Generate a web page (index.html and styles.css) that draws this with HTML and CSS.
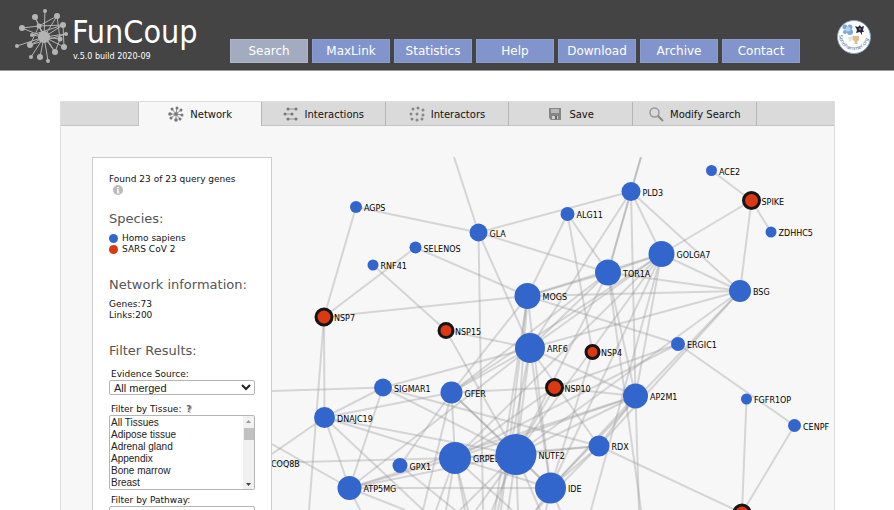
FILE: index.html
```html
<!DOCTYPE html>
<html lang="en">
<head>
<meta charset="utf-8">
<title>FunCoup</title>
<link rel="stylesheet" href="styles.css">
</head>
<body>
<header class="header">
  <a class="brand" href="#">
    <svg class="brand-logo" viewBox="0 0 56 58" aria-hidden="true">
      <g stroke="#b4b4b4" stroke-width="1" fill="none">
        <path d="M29 30L30 4M29 30L20 10M29 30L42 9M29 30L48 18M29 30L51 27M29 30L45 32M29 30L49 40M29 30L40 45M29 30L33 54M29 30L25 50M29 30L16 50M29 30L15 38M29 30L2 39M29 30L17 28M29 30L7 21M29 30L24 19"/>
        <path d="M20 10L24 19L48 18M42 9L24 19M24 19L7 21M42 9L45 32M48 18L17 28M15 38L51 27M15 38L24 19M45 32L40 45M48 18L49 40M24 19L40 45"/>
      </g>
      <g fill="#b4b4b4">
        <circle cx="29" cy="30" r="6"/><circle cx="30" cy="4" r="2"/><circle cx="20" cy="10" r="3"/>
        <circle cx="42" cy="9" r="3"/><circle cx="48" cy="18" r="3"/><circle cx="51" cy="27" r="2"/>
        <circle cx="45" cy="32" r="2.5"/><circle cx="49" cy="40" r="3"/><circle cx="40" cy="45" r="3"/>
        <circle cx="33" cy="54" r="2"/><circle cx="25" cy="50" r="3"/><circle cx="16" cy="50" r="2"/>
        <circle cx="15" cy="38" r="3"/><circle cx="2" cy="39" r="2"/><circle cx="17" cy="28" r="2"/>
        <circle cx="7" cy="21" r="3"/><circle cx="24" cy="19" r="2.5"/>
      </g>
    </svg>
    <span class="brand-text">
      <span class="brand-name">FunCoup</span>
      <span class="brand-version">v.5.0 build 2020-09</span>
    </span>
  </a>
  <nav class="nav">
    <a class="nav-item active" href="#">Search</a>
    <a class="nav-item" href="#">MaxLink</a>
    <a class="nav-item" href="#">Statistics</a>
    <a class="nav-item" href="#">Help</a>
    <a class="nav-item" href="#">Download</a>
    <a class="nav-item" href="#">Archive</a>
    <a class="nav-item" href="#">Contact</a>
  </nav>
  <a class="lab" href="#" aria-label="sonnhammer.org">
    <svg viewBox="0 0 36 36">
      <circle cx="18" cy="18" r="16.5" fill="#fff" stroke="#86a3c8"/>
      <g fill="#7fa8d6"><circle cx="9" cy="8" r="2.5"/><circle cx="14" cy="8" r="2.5"/><circle cx="9" cy="13" r="2"/><circle cx="14" cy="13" r="3"/></g>
      <circle cx="12" cy="10" r="2.5" fill="#b5d0ea"/>
      <path d="M19 7l3 1 2-2 1 2 3-1-1 4 1 2-2 0 0 3-2-3-4 1 1-3z" fill="#222a3c"/>
      <circle cx="24" cy="10" r="1" fill="#c66"/>
      <path d="M12 18l5-1v4l-4 2z" fill="#e4e4e4"/>
      <path d="M17 17h6v4l-2 2 1 2h-4l1-2-2-2z" fill="#e2bd8c"/>
      <path id="labArc" d="M3 16A15 15 0 0 0 33 16" fill="none"/>
      <text class="lab-text"><textPath href="#labArc">Sonnhammer.org</textPath></text>
    </svg>
  </a>
</header>

<main class="results">
  <nav class="tabs">
    <a class="tab current" href="#">
      <svg class="tab-icon" viewBox="0 0 16 16"><g stroke="#888" fill="#777"><path d="M8 8L9 2M8 8L13 4M8 8L14 9M8 8L12 13M8 8L8 14M8 8L3 12M8 8L2 8M8 8L4 3" /><g stroke="none"><circle cx="9" cy="2" r="1.5"/><circle cx="13" cy="4" r="1.5"/><circle cx="14" cy="9" r="1.5"/><circle cx="12" cy="13" r="1.5"/><circle cx="8" cy="14" r="1.8"/><circle cx="3" cy="12" r="1.5"/><circle cx="2" cy="8" r="1.8"/><circle cx="4" cy="3" r="1.5"/><circle cx="8" cy="8" r="1.8"/></g></g></svg>
      Network</a>
    <a class="tab" href="#">
      <svg class="tab-icon" viewBox="0 0 16 16"><g stroke="#999" fill="#777"><path d="M5 3H13M2 8H9M5 13H13"/><g stroke="none"><circle cx="5" cy="3" r="1.5"/><circle cx="13" cy="3" r="1.5"/><circle cx="2" cy="8" r="1.5"/><circle cx="9" cy="8" r="1.5"/><circle cx="5" cy="13" r="1.5"/><circle cx="13" cy="13" r="1.5"/></g></g></svg>
      Interactions</a>
    <a class="tab" href="#">
      <svg class="tab-icon" viewBox="0 0 16 16"><g fill="#888"><circle cx="9" cy="2" r="1.5"/><circle cx="14" cy="4" r="1.5"/><circle cx="4" cy="3" r="1.5"/><circle cx="2" cy="8" r="1.5"/><circle cx="8" cy="8" r="1.5"/><circle cx="14" cy="9" r="1.5"/><circle cx="3" cy="13" r="1.5"/><circle cx="8" cy="14" r="1.5"/><circle cx="13" cy="13" r="1.5"/></g></svg>
      Interactors</a>
    <a class="tab" href="#">
      <svg class="tab-icon" viewBox="0 0 16 16"><path d="M2 2H14V14H4L2 12Z" fill="#858585"/><path d="M4 3H12V7H4Z" fill="#dadada"/><path d="M4 4H12M4 6H12" stroke="#999"/><path d="M5 10H11V13H5Z" fill="#cfcfcf"/><path d="M8 10H10V13H8Z" fill="#666"/></svg>
      Save</a>
    <a class="tab" href="#">
      <svg class="tab-icon" viewBox="0 0 16 16"><circle cx="6.5" cy="6.5" r="4.5" fill="none" stroke="#999" stroke-width="1.5"/><path d="M10 10L15 15" stroke="#888" stroke-width="2"/></svg>
      Modify Search</a>
  </nav>

  <div class="content">
    <aside class="panel">
      <p class="query">Found 23 of 23 query genes
        <svg class="info" viewBox="0 0 10 10"><circle cx="5" cy="5" r="5" fill="#bbb"/><path d="M5 2V3.2M5 4.2V8" stroke="#fff" stroke-width="1.6" fill="none"/><path d="M4 4.5H5M4 8H6.5" stroke="#fff" stroke-width=".8"/></svg>
      </p>

      <section class="section">
        <h2>Species:</h2>
        <div class="species"><span class="dot human"></span>Homo sapiens</div>
        <div class="species"><span class="dot virus"></span>SARS CoV 2</div>
      </section>

      <section class="section">
        <h2>Network information:</h2>
        <div>Genes:73</div>
        <div>Links:200</div>
      </section>

      <form class="section">
        <h2>Filter Results:</h2>
        <div class="field">
          <label for="evidence">Evidence Source:</label>
          <select id="evidence"><option>All merged</option></select>
        </div>
        <div class="field list">
          <label for="tissue">Filter by Tissue: <b class="help">?</b></label>
          <select id="tissue" size="6">
            <option>All Tissues</option><option>Adipose tissue</option><option>Adrenal gland</option>
            <option>Appendix</option><option>Bone marrow</option><option>Breast</option>
          </select>
          <svg class="scrollbar" viewBox="0 0 11 73" aria-hidden="true">
            <path d="M0 0H11V73H0Z" fill="#f1f1f1"/>
            <path d="M3 7H8L5.5 4Z" fill="#999"/>
            <path d="M1 12H11V24H1Z" fill="#c1c1c1"/>
            <path d="M3 67H8L5.5 70Z" fill="#444"/>
          </svg>
        </div>
        <div class="field">
          <label for="pathway">Filter by Pathway:</label>
          <select id="pathway"><option>None</option></select>
        </div>
      </form>
    </aside>
    <svg class="graph" id="graph"></svg>
  </div>
</main>
<script src="network.js"></script>
</body>
</html>
```
FILE: styles.css
```css
body {
    margin: 0;
    height: 100vh;
    overflow: hidden;
    background: #fff;
    color: #111;
    font-family: Verdana, "DejaVu Sans", sans-serif;
    font-size: 9px;
    line-height: 11px;
}

a {
    color: inherit;
    text-decoration: none;
}

/* header */
.header {
    display: flex;
    height: 70px;
    background: #444;
    border-bottom: 1px solid #999;
    color: #fff;
}

.brand {
    display: flex;
    width: 215px;
    padding: 7px 0 0 15px;
}

.brand-logo {
    width: 56px;
    height: 58px;
}

.brand-text {
    display: flex;
    flex-direction: column;
    padding: 7px 0 0 1px;
}

.brand-name {
    font-family: "DejaVu Sans Condensed", "DejaVu Sans", sans-serif;
    font-size: 32px;
    line-height: 37px;
}

.brand-version {
    padding-left: 1px;
    font-size: 8px;
}

.nav {
    display: flex;
    align-items: flex-end;
    gap: 4px;
    padding-bottom: 7px;
}

.nav-item {
    box-sizing: border-box;
    width: 78px;
    height: 24px;
    border: 1px solid #8c9dcb;
    background: #8195cc;
    font-size: 12px;
    line-height: 22px;
    text-align: center;
}

.nav-item.active {
    border-color: #adb5c6;
    background: #a2abc0;
}

.lab {
    width: 36px;
    height: 36px;
    margin: 19px 22px 0 auto;
}

.lab-text {
    fill: #4d6f9c;
    font-size: 5px;
}

/* result box */
.results {
    margin: 30px 59px 0 60px;
    border: 1px solid #ddd;
    background: #f7f7f7;
}

.tabs {
    display: flex;
    height: 24px;
    background: #dadada;
    justify-content: center;
    box-shadow: inset 0 -1px #c4c4c4;
}

.tab {
    display: flex;
    align-items: center;
    justify-content: center;
    gap: 6px;
    box-sizing: border-box;
    width: 16%;
    border-right: 1px solid #b5b5b5;
    color: #111;
    font-size: 10px;
}

.tab.current {
    border-left: 1px solid #c4c4c4;
    background: #f7f7f7;
}

.tab-icon {
    width: 16px;
    height: 16px;
}

.content {
    display: flex;
    padding: 31px 0 0 31px;
}

/* left panel */
.panel {
    box-sizing: border-box;
    width: 180px;
    flex: none;
    padding: 16px;
    border: 1px solid #ccc;
    background: #fff;
}

.query {
    margin: 0 0 16px;
    white-space: nowrap;
}

.info {
    display: block;
    width: 10px;
    height: 10px;
    margin-left: 4px;
}

.section + .section {
    margin-top: 22px;
}

h2 {
    margin: 0 0 6px;
    color: #555;
    font-size: 13px;
    font-weight: normal;
    line-height: 16px;
    white-space: nowrap;
}

.species {
    display: flex;
    align-items: center;
    gap: 4px;
}

.dot {
    width: 9px;
    height: 9px;
    border-radius: 50%;
}

.human {
    background: #3366cc;
}

.virus {
    background: #dc3912;
}

.field {
    position: relative;
    padding-top: 4px;
    margin-bottom: 5px;
}

.field.list {
    margin-bottom: 1px;
}

label {
    display: block;
    padding-left: 2px;
}

.help {
    margin-left: 2px;
    color: #666;
    text-shadow: 1px 1px #bbb;
}

select {
    display: block;
    box-sizing: border-box;
    width: 100%;
    height: 15px;
    padding: 0;
    border: 1px solid #b5b5b5;
    border-radius: 2px;
    background: #fff;
    color: #222;
    font-family: Arial, "Liberation Sans", sans-serif;
    font-size: 11px;
}

.list select {
    height: 75px;
    padding-top: 1px;
    font-size: 10px;
}

.list option {
    min-height: 12px;
    padding: 0 1px;
    line-height: 12px;
}

.scrollbar {
    position: absolute;
    right: 1px;
    bottom: 1px;
    width: 11px;
    height: 73px;
}

/* network */
.graph {
    flex: 1;
    min-width: 0;
    height: 600px;
}

.link {
    stroke: #999;
    stroke-opacity: .36;
    stroke-width: 2px;
}

.node {
    fill: #3366cc;
}

.node.query-gene {
    fill: #dc3912;
    stroke: #151515;
    stroke-width: 3px;
}

.node-label {
    fill: #000;
    font-size: 8px;
}
```
FILE: network.js
```js
// name: [x, y, radius, is query gene]
var nodes = {
  AGPS: [84, 50, 6], GLA: [206.5, 75.5, 9], SELENOS: [143.5, 90.5, 6], RNF41: [101, 108, 5.5],
  NSP7: [52, 160, 8, 1], NSP15: [174, 173.5, 7, 1], MOGS: [255.5, 139, 13], ALG11: [295.5, 57, 7],
  PLD3: [359, 34.5, 9.5], TOR1A: [336, 115.5, 13], GOLGA7: [389.5, 97, 13], ACE2: [439.5, 13.5, 5.5],
  SPIKE: [479.5, 43.5, 8, 1], ZDHHC5: [499, 75, 5.5], BSG: [468, 134, 11], ERGIC1: [406, 187, 7],
  NSP4: [320.5, 195, 6.5, 1], ARF6: [258, 191, 15], NSP10: [282.5, 230.5, 8, 1], AP2M1: [363.5, 239, 12.5],
  SIGMAR1: [111, 230.5, 9], GFER: [179.5, 235.5, 11], DNAJC19: [52.5, 260.5, 10.5], COQ8B: [-11, 306, 8],
  GPX1: [128, 308.5, 7.5], GRPEL1: [183, 301, 16], NUTF2: [244, 297.5, 20.5], RDX: [327, 289, 10.5],
  IDE: [278.5, 331, 15.5], ATP5MG: [77.5, 331, 12], FGFR1OP: [474.5, 242, 5.5], CENPF: [522.5, 268.5, 6.5],
  NSP9: [470, 356, 8, 1]
};

var links = {
  AGPS: ['GLA', 'NSP7'],
  SELENOS: ['NSP7', 'MOGS'],
  RNF41: ['NSP15'],
  NSP7: ['MOGS', 'DNAJC19', [37, 353]],
  GLA: [[182, 0], 'PLD3', 'TOR1A', 'ARF6', [211, 353]],
  MOGS: ['TOR1A', 'GOLGA7', 'BSG', 'ALG11', 'GFER', 'ERGIC1', 'NUTF2', 'IDE', [223, 353], [229, 353]],
  ALG11: ['TOR1A', 'NSP4'],
  PLD3: [[369, 0], [369, 0], 'TOR1A', 'TOR1A', 'GOLGA7', 'BSG', 'AP2M1', 'ARF6'],
  TOR1A: ['GOLGA7', 'BSG', 'ARF6', 'GFER', 'NUTF2', 'AP2M1', [369, 353]],
  GOLGA7: ['SPIKE', 'BSG', 'ARF6', 'AP2M1', 'IDE', 'NUTF2', 'GRPEL1', 'GFER', [319, 353]],
  SPIKE: ['ACE2', 'ZDHHC5', 'BSG'],
  BSG: ['ARF6', 'NUTF2', 'IDE', 'RDX'],
  ERGIC1: ['CENPF', 'NSP10', 'GRPEL1'],
  NSP15: ['ARF6', 'NUTF2'],
  NSP4: ['IDE'],
  ARF6: ['SIGMAR1', 'GFER', 'ATP5MG', 'NUTF2', 'IDE', 'AP2M1', 'RDX', [226, 353]],
  NSP10: ['GFER', 'NUTF2', 'AP2M1', 'GRPEL1'],
  SIGMAR1: [[0, 234], 'DNAJC19', 'ATP5MG', 'NUTF2', 'RDX'],
  GFER: ['DNAJC19', 'GRPEL1', 'NUTF2', 'IDE', 'GPX1', [151, 353]],
  DNAJC19: ['GRPEL1', 'NUTF2', 'ATP5MG', [0, 297], [151, 353]],
  GPX1: [[183, 353]],
  COQ8B: ['GRPEL1'],
  GRPEL1: ['NUTF2', 'ATP5MG', 'IDE', 'RDX', 'AP2M1', [164, 353], [174, 353], [193, 353], [196, 353], [240, 353]],
  ATP5MG: [[0, 287], 'IDE', 'NUTF2', [88, 353], [133, 353]],
  NUTF2: ['RDX', 'IDE', 'AP2M1', [188, 353], [204, 353], [220, 353], [236, 353], [246, 353], [268, 353]],
  RDX: ['IDE', 'AP2M1', 'NSP9', [264, 353]],
  AP2M1: ['IDE', 'ATP5MG', [367, 353]],
  IDE: [[264, 353], [274, 353], [288, 353]],
  FGFR1OP: ['NSP9'],
  CENPF: ['NSP9']
};

var graph = document.getElementById("graph");

function add(tag, attrs) {
  var el = document.createElementNS("http://www.w3.org/2000/svg", tag);
  for (var key in attrs) {
    el.setAttribute(key, attrs[key]);
  }
  graph.appendChild(el);
  return el;
}

for (var from in links) {
  links[from].forEach(function(to) {
    var a = nodes[from];
    // a plain point is a neighbour outside of the visible area
    var b = nodes[to] || to;
    add("line", {"class": "link", x1: a[0], y1: a[1], x2: b[0], y2: b[1]});
  });
}

for (var name in nodes) {
  var n = nodes[name];
  add("circle", {"class": n[3] ? "node query-gene" : "node", cx: n[0], cy: n[1], r: n[2]});
  // nodes on the lower edge stay without a label
  if (n[1] < 350) {
    add("text", {"class": "node-label", x: n[0] + n[2] + 2, y: n[1] + 4}).textContent = name;
  }
}
```
